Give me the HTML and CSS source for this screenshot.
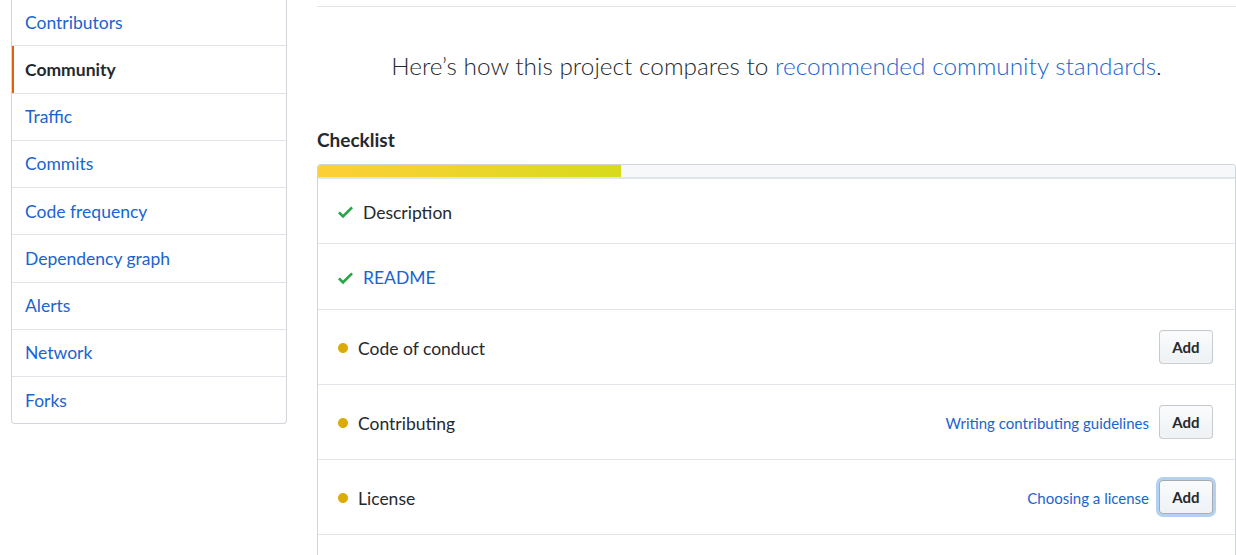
FILE: index.html
```html
<!DOCTYPE html>
<html lang="en">
<head>
<meta charset="utf-8">
<title>Community</title>
<link rel="stylesheet" href="styles.css">
</head>
<body>
<div class="layout">
  <nav class="menu">
    <a class="menu-item" href="#">Contributors</a>
    <a class="menu-item selected" href="#">Community</a>
    <a class="menu-item" href="#">Traffic</a>
    <a class="menu-item" href="#">Commits</a>
    <a class="menu-item" href="#">Code frequency</a>
    <a class="menu-item" href="#">Dependency graph</a>
    <a class="menu-item" href="#">Alerts</a>
    <a class="menu-item" href="#">Network</a>
    <a class="menu-item" href="#">Forks</a>
  </nav>
  <main class="main">
    <div class="prev-section"></div>
    <p class="lead">Here’s how this project compares to <a href="#">recommended community standards</a>.</p>
    <h3 class="section-title">Checklist</h3>
    <div class="box">
      <div class="progress"><span class="progress-bar" style="width:33%"></span></div>
      <ul class="checklist">
        <li class="row row-first">
          <svg class="icon-check" width="15" height="20" viewBox="0 0 12 16"><path fill-rule="evenodd" d="M12 5l-8 8-4-4 1.5-1.5L4 10l6.5-6.5L12 5z"/></svg>
          <span class="label">Description</span>
        </li>
        <li class="row">
          <svg class="icon-check" width="15" height="20" viewBox="0 0 12 16"><path fill-rule="evenodd" d="M12 5l-8 8-4-4 1.5-1.5L4 10l6.5-6.5L12 5z"/></svg>
          <a class="label" href="#">README</a>
        </li>
        <li class="row row-action">
          <svg class="icon-dot" width="10" height="20" viewBox="0 0 8 16"><path fill-rule="evenodd" d="M0 8c0-2.2 1.8-4 4-4s4 1.8 4 4-1.8 4-4 4-4-1.8-4-4z"/></svg>
          <span class="label">Code of conduct</span>
          <span class="actions"><button class="btn">Add</button></span>
        </li>
        <li class="row row-action">
          <svg class="icon-dot" width="10" height="20" viewBox="0 0 8 16"><path fill-rule="evenodd" d="M0 8c0-2.2 1.8-4 4-4s4 1.8 4 4-1.8 4-4 4-4-1.8-4-4z"/></svg>
          <span class="label">Contributing</span>
          <span class="actions"><a class="help" href="#">Writing contributing guidelines</a><button class="btn">Add</button></span>
        </li>
        <li class="row row-action">
          <svg class="icon-dot" width="10" height="20" viewBox="0 0 8 16"><path fill-rule="evenodd" d="M0 8c0-2.2 1.8-4 4-4s4 1.8 4 4-1.8 4-4 4-4-1.8-4-4z"/></svg>
          <span class="label">License</span>
          <span class="actions"><a class="help" href="#">Choosing a license</a><button class="btn focused">Add</button></span>
        </li>
        <li class="row row-action"></li>
      </ul>
    </div>
  </main>
</div>
</body>
</html>
```

FILE: styles.css
```css
* { box-sizing: border-box; }
html, body { margin: 0; padding: 0; background: #fff; overflow: hidden; }
body {
  font-family: "Segoe UI", "Lato", "Liberation Sans", sans-serif;
  color: #24292e;
  height: 555px;
}
a { color: #1a64cf; text-decoration: none; }

.layout {
  display: flex;
  align-items: flex-start;
  padding-left: 11px;
}

.menu {
  width: 276px;
  flex: none;
  margin-top: -1px;
  border: 1px solid #d1d5da;
  border-top: none;
  border-radius: 0 0 4px 4px;
  display: flex;
  flex-direction: column;
}
.menu-item {
  position: relative;
  display: flex;
  align-items: center;
  flex: none;
  height: 47.25px;
  padding-left: 13px;
  font-size: 17.5px;
  color: #1a64cf;
  border-top: 1px solid #e1e4e8;
}
.menu-item:first-child { border-top: none; height: 46.25px; }
.menu-item.selected { color: #24292e; font-weight: 700; }
.menu-item.selected::before {
  content: "";
  position: absolute;
  left: 0; top: 0; bottom: 0;
  width: 2px;
  background: #e36209;
}

.main {
  margin-left: 30px;
  width: 919px;
  flex: none;
}
.prev-section {
  height: 7px;
  border-bottom: 1px solid #e1e4e8;
  margin-right: -2px;
}
.lead {
  margin: 42px 0 0;
  text-align: center;
  font-size: 24.4px;
  font-weight: 300;
  line-height: 34px;
}
.section-title {
  margin: 44px 0 0;
  font-size: 19px;
  font-weight: 700;
  line-height: 26px;
}

.box {
  margin-top: 11px;
  border: 1px solid #d1d5da;
  border-bottom: none;
  border-radius: 4px 4px 0 0;
  overflow: hidden;
}
.progress {
  display: flex;
  height: 14px;
  background: #f6f8fa;
  border-bottom: 2px solid #e1e4e8;
}
.progress-bar {
  display: block;
  height: 12px;
  background: linear-gradient(90deg, #fdcf38, #d8db1c);
}

.checklist { list-style: none; margin: 0; padding: 0; }
.row {
  display: flex;
  align-items: center;
  height: 66px;
  padding: 2px 22px 0 20px;
  border-top: 1px solid #e1e4e8;
  font-size: 17.5px;
  line-height: 25px;
}
.row.row-first { border-top: none; height: 64px; }
.row.row-action { height: 75px; padding-top: 0; }
.row-action .label { position: relative; top: 1px; }
.row-action svg { position: relative; top: 1px; }
.icon-check { fill: #28a745; flex: none; margin-right: 10px; }
.icon-dot { fill: #dbab09; flex: none; margin-right: 10px; }
.actions {
  margin-left: auto;
  display: flex;
  align-items: center;
  gap: 10px;
}
.help { font-size: 15px; position: relative; top: 1px; }
.btn {
  font-family: inherit;
  font-size: 15px;
  font-weight: 700;
  color: #24292e;
  height: 34px;
  width: 54px;
  padding: 0;
  border: 1px solid rgba(27, 31, 35, 0.2);
  border-radius: 4px;
  background: linear-gradient(180deg, #fafbfc, #eff3f6 90%);
  cursor: pointer;
}
.btn.focused {
  box-shadow: 0 0 0 3px rgba(3, 102, 214, 0.3);
  border-color: rgba(27, 31, 35, 0.35);
}
```
